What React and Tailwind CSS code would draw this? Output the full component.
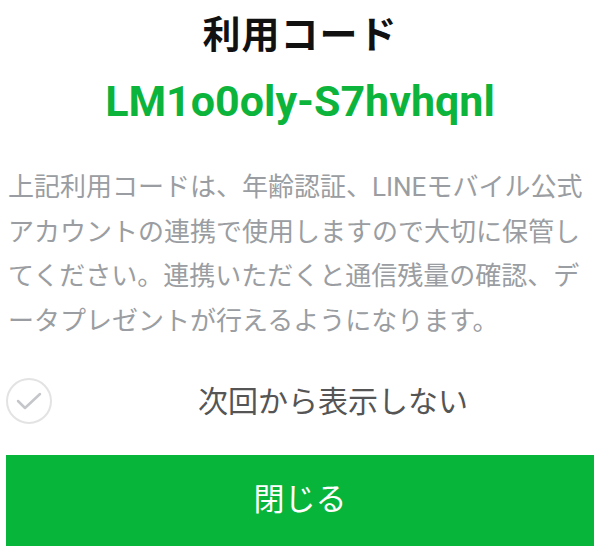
import React, { useState } from 'react';

const jp = '"Roboto", "Noto Sans CJK JP", sans-serif';

const lines = [
  '上記利用コードは、年齢認証、LINEモバイル公式',
  'アカウントの連携で使用しますので大切に保管し',
  'てください。連携いただくと通信残量の確認、デ',
  'ータプレゼントが行えるようになります。',
];

const App = () => {
  // checkbox for "don't show again"
  const [checked, setChecked] = useState(false);

  return (
    <div className="w-[600px] h-[554px] bg-white overflow-hidden" style={{ fontFamily: jp }}>
      <div className="flex flex-col items-center pt-[5px]">
        <h1 className="text-[38px] leading-[60px] font-bold text-[#111] tracking-[1px]">利用コード</h1>
        <p className="mt-[8px] text-[43px] leading-[56px] font-bold text-[#0cb43c]">LM1o0oly-S7hvhqnl</p>
      </div>

      <p className="mt-[36px] pl-[8px] text-[26px] leading-[44.5px] text-[#9a9da1] whitespace-nowrap">
        {lines.map((l, i) => (
          <span key={i} className="block">{l}</span>
        ))}
      </p>

      <div className="mt-[35px] flex items-center px-[6px]">
        <button
          onClick={() => setChecked(!checked)}
          className="w-[46px] h-[46px] rounded-full border-[2px] border-[#e3e3e3] flex items-center justify-center"
        >
          <svg width="26" height="20" viewBox="0 0 26 20" fill="none">
            <path
              d="M2 10 L9 17 L24 3"
              stroke={checked ? '#0cb43c' : '#c4c6c9'}
              strokeWidth="2.5"
              strokeLinecap="round"
              strokeLinejoin="round"
            />
          </svg>
        </button>
        <span className="ml-[146px] text-[30px] text-[#555]">次回から表示しない</span>
      </div>

      <div className="mt-[31px] px-[6px]">
        <button className="w-full h-[91px] bg-[#07b53b] text-white text-[31px] flex items-center justify-center">
          閉じる
        </button>
      </div>
    </div>
  );
};

export default App;
